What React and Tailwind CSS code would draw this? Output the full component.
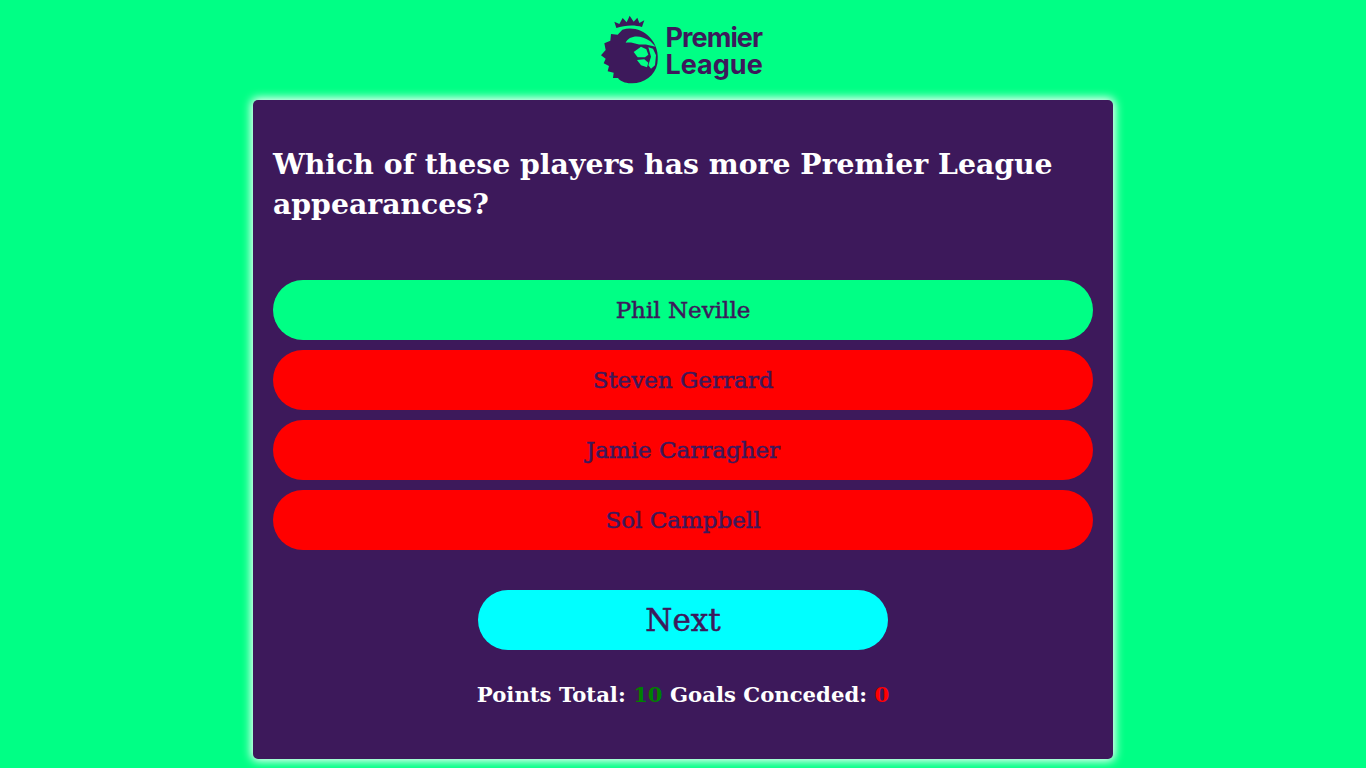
const serif = { fontFamily: '"DejaVu Serif", serif' };

function Lion() {
  return (
    <svg width="66" height="76" viewBox="0 0 198 228" className="shrink-0">
      <path fill="#3d195b" d="M52 48 L46 29 L61 36 L71 18 L83 31 L92 11 L104 29 L115 17 L121 33 L136 25 L129 45 C105 37 75 40 52 48 Z" />
      <path fill="#3d195b" d="M70 53 C100 44 132 54 152 76 C172 96 180 125 175 155 C168 192 132 216 95 214 C78 213 64 208 57 198 L42 198 L44 182 L26 178 L30 162 L14 154 L20 140 L6 130 L20 114 L16 94 L34 86 L36 66 L56 68 Z" />
      <path fill="#00ff85" d="M80 92 C90 70 124 66 154 88 L170 104 L150 100 C140 94 128 100 114 96 C104 92 92 90 80 92 Z" />
      <path fill="#00ff85" d="M104 120 L126 104 L142 112 L148 128 L138 136 L116 136 Z" />
      <path fill="#00ff85" d="M148 106 L162 110 L171 130 L168 160 L156 170 L148 160 L156 134 Z" />
      <path fill="#00ff85" d="M114 144 L136 142 L148 152 L144 166 L126 160 Z" />
    </svg>
  );
}

export default function App() {
  return (
    <div className="min-h-screen bg-[#00ff85] flex flex-col items-center pt-[12px]" style={serif}>
      <div className="flex items-center gap-[1px] h-[76px]">
        <Lion />
        <div className="flex flex-col text-[#3d195b] font-bold text-[27px] leading-[27px] w-[102px] pt-[1px]" style={{ fontFamily: 'Inter, sans-serif' }}>
          <span className="tracking-[-0.9px]">Premier</span>
          <span className="tracking-[0px]">League</span>
        </div>
      </div>
      <div className="mt-[12px] w-[860px] h-[659px] bg-[#3d195b] rounded-[5px] shadow-[0_0_10px_2px_#ffffff] p-5 flex flex-col">
        <h1 className="text-[28.3px] leading-[40px] font-bold text-white mt-[24px]">
          Which of these players has more Premier League appearances?
        </h1>
        <div className="mt-[56px] flex flex-col gap-[10px] text-[23px] text-[#3d195b] [-webkit-text-stroke:0.5px_#3d195b]">
          <div className="h-[60px] rounded-[30px] bg-[#00ff85] flex items-center justify-center pt-[1px]">Phil Neville</div>
          <div className="h-[60px] rounded-[30px] bg-[#ff0000] flex items-center justify-center pt-[1px]">Steven Gerrard</div>
          <div className="h-[60px] rounded-[30px] bg-[#ff0000] flex items-center justify-center pt-[1px]">Jamie Carragher</div>
          <div className="h-[60px] rounded-[30px] bg-[#ff0000] flex items-center justify-center pt-[1px]">Sol Campbell</div>
        </div>
        <div className="mt-[40px] self-center w-[410px] h-[60px] rounded-[30px] bg-[#00ffff] text-[#3d195b] text-[31px] [-webkit-text-stroke:0.5px_#3d195b] flex items-center justify-center">Next</div>
        <p className="mt-[30px] text-center text-[21.2px] leading-[30px] font-bold text-white">
          Points Total: <span className="text-[#008000]">10</span> Goals Conceded: <span className="text-[#ff0000]">0</span>
        </p>
      </div>
    </div>
  );
}
